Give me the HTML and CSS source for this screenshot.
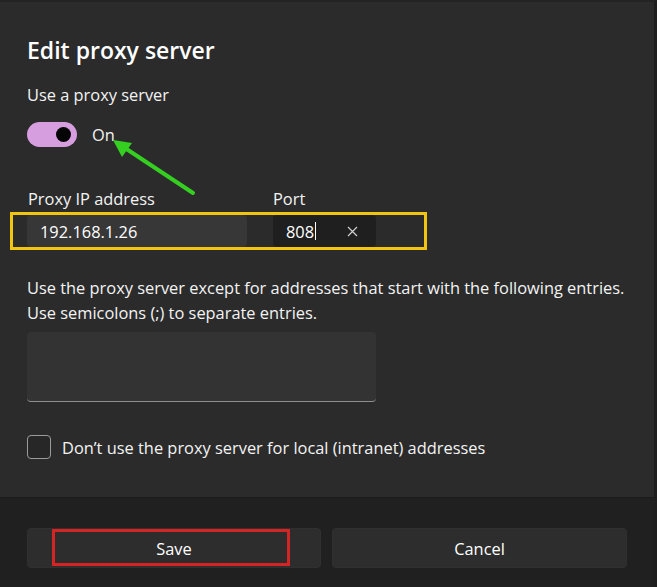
FILE: index.html
```html
<!DOCTYPE html>
<html>
  <head>
    <link rel="stylesheet" href="styles.css">
  </head>
  <body>
    <div class="dialog">
      <div class="content">
        <h1 class="title">Edit proxy server</h1>
        <div class="setting-label">Use a proxy server</div>
        <div class="toggle-row">
          <span class="toggle"><span class="toggle-knob"></span></span>
          <span class="toggle-text">On</span>
        </div>

        <div class="field-labels">
          <span class="label-ip">Proxy IP address</span>
          <span class="label-port">Port</span>
        </div>
        <div class="field-row">
          <div class="input input-ip">192.168.1.26</div>
          <div class="input input-port">
            <span>808</span><span class="caret"></span>
            <svg class="clear-icon" width="11" height="11" viewBox="0 0 11 11">
              <path d="M1 1 L10 10 M10 1 L1 10" stroke="#cfcfcf" stroke-width="1.2" fill="none" />
            </svg>
          </div>
          <div class="mark-yellow"></div>
        </div>

        <p class="description">
          Use the proxy server except for addresses that start with the following entries.<br>
          Use semicolons (;) to separate entries.
        </p>
        <div class="textarea"></div>

        <div class="check-row">
          <span class="checkbox"></span>
          <span>Don’t use the proxy server for local (intranet) addresses</span>
        </div>

        <svg class="arrow" width="100" height="70" viewBox="0 0 100 70">
          <line x1="88" y1="58" x2="20" y2="13" stroke="#35cf22" stroke-width="4" stroke-linecap="round" />
          <polygon points="8,5 27,8 17,22" fill="#35cf22" />
        </svg>
      </div>

      <div class="footer">
        <button class="btn btn-save">Save<span class="mark-red"></span></button>
        <button class="btn">Cancel</button>
      </div>
    </div>
  </body>
</html>
```
FILE: styles.css
```css
* {
  box-sizing: border-box;
}
body {
  margin: 0;
  background-color: #2b2b2b;
  font-family: "Open Sans", "Noto Sans", sans-serif;
  color: #f3f3f3;
}
.dialog {
  width: 657px;
  height: 587px;
  display: flex;
  flex-direction: column;
  background-color: #2b2b2b;
  border-top: 2px solid #232323;
  border-right: 3px solid #1e1e1e;
}

.content {
  position: relative;
  flex: 1;
  padding: 32px 27px 0 27px;
}

.title {
  margin: 0;
  font-size: 23px;
  font-weight: 600;
  line-height: 32px;
  color: #ffffff;
}

.setting-label {
  margin-top: 18px;
  font-size: 16.4px;
  line-height: 22px;
}

.toggle-row {
  margin-top: 16px;
  display: flex;
  align-items: center;
  height: 25px;
}
.toggle {
  width: 50px;
  height: 25px;
  border-radius: 13px;
  background-color: #d69ddf;
  display: flex;
  align-items: center;
  justify-content: flex-end;
  padding-right: 6px;
}
.toggle-knob {
  width: 15px;
  height: 15px;
  border-radius: 50%;
  background-color: #050505;
}
.toggle-text {
  margin-left: 15px;
  font-size: 16.4px;
}

.field-labels {
  margin-top: 41px;
  display: flex;
  font-size: 16.4px;
  line-height: 22px;
}
.label-ip {
  width: 246px;
  padding-left: 1px;
}

.field-row {
  position: relative;
  margin-top: 5px;
  display: flex;
  gap: 26px;
  height: 32px;
}
.input {
  height: 32px;
  border-radius: 4px;
  display: flex;
  align-items: center;
  padding-left: 13px;
  font-size: 16.4px;
  color: #ffffff;
}
.input-ip {
  width: 220px;
  background-color: #373737;
}
.input-port {
  width: 103px;
  background-color: #1f1f1f;
}
.caret {
  width: 1px;
  height: 18px;
  margin-left: 1px;
  background-color: #ffffff;
}
.clear-icon {
  margin-left: 31px;
}

.mark-yellow {
  position: absolute;
  left: -17px;
  top: -3px;
  width: 417px;
  height: 38px;
  border: 3px solid #f2c511;
}

.description {
  margin: 28px 0 0 0;
  font-size: 16.4px;
  line-height: 25px;
}

.textarea {
  margin-top: 7px;
  width: 349px;
  height: 70px;
  border-radius: 4px;
  background-color: #333333;
  border-bottom: 1px solid #8f8f8f;
}

.check-row {
  margin-top: 33px;
  display: flex;
  align-items: center;
  gap: 11px;
  font-size: 16.4px;
}
.checkbox {
  width: 24px;
  height: 24px;
  border-radius: 4px;
  border: 1px solid #9b9b9b;
  background-color: #272727;
}

.arrow {
  position: absolute;
  left: 105px;
  top: 133px;
}

.footer {
  height: 90px;
  background-color: #202020;
  border-top: 1px solid #1b1b1b;
  padding: 30px 27px 0 27px;
  display: grid;
  grid-template-columns: 294px 295px;
  column-gap: 11px;
  align-items: start;
}
.btn {
  position: relative;
  height: 40px;
  border: 1px solid #303030;
  border-radius: 4px;
  background-color: #2d2d2d;
  color: #ffffff;
  font-family: "Open Sans", "Noto Sans", sans-serif;
  font-size: 16.4px;
}
.mark-red {
  position: absolute;
  left: 24px;
  top: 0px;
  width: 238px;
  height: 37px;
  border: 3px solid #d42424;
}
```
